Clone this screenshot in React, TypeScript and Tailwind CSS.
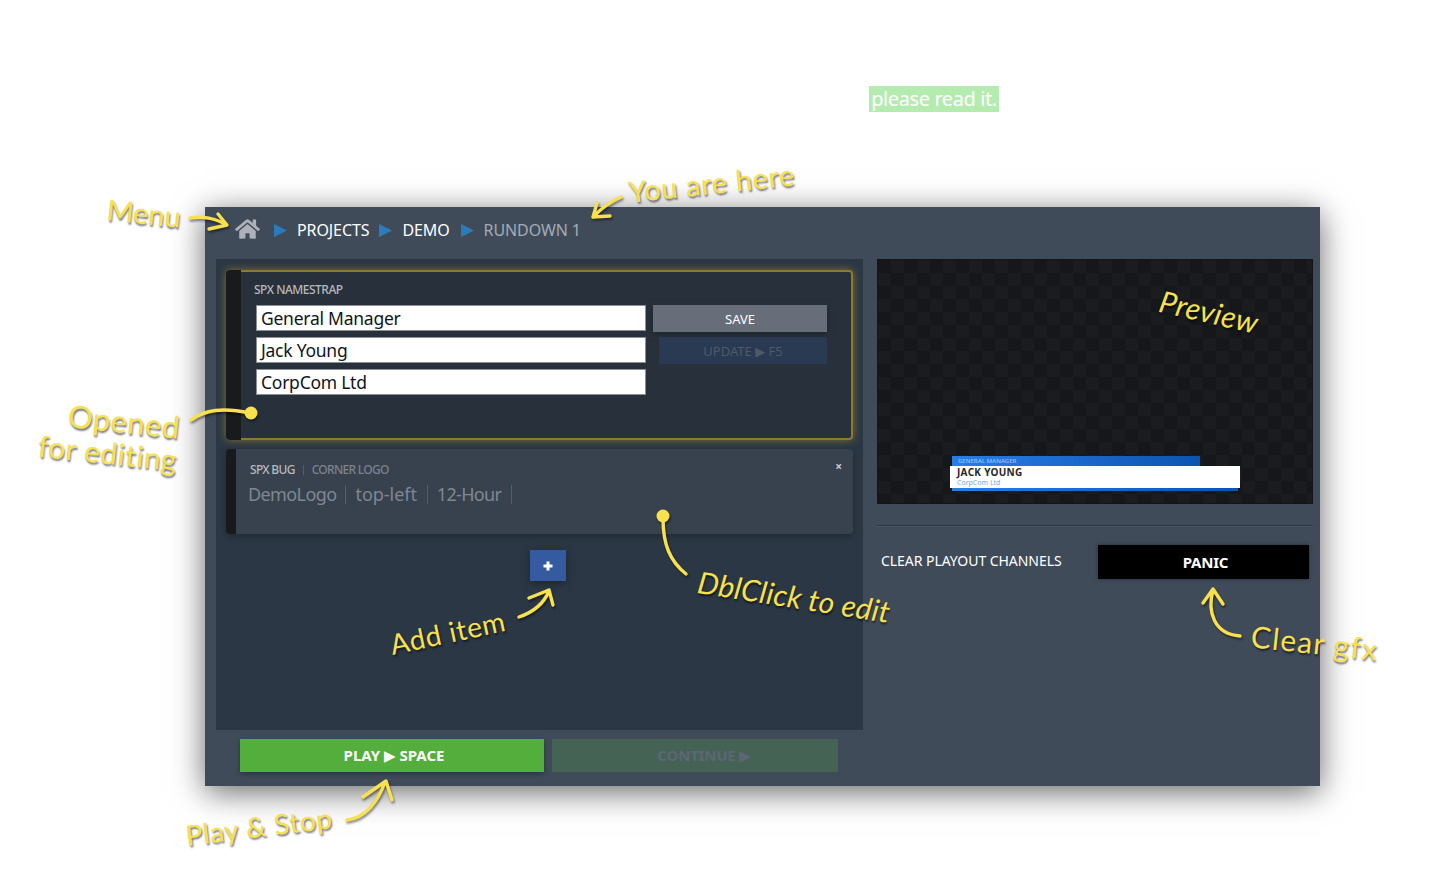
import { FaHome } from "react-icons/fa";

const ui = "font-['Noto_Sans','DejaVu_Sans',sans-serif]";
const note =
  "absolute whitespace-nowrap leading-none font-['Lato',sans-serif] text-[#f7e14f] [text-shadow:1px_2px_2px_rgba(0,0,0,0.55)]";

function Tri() {
  return (
    <svg width="13" height="13" viewBox="0 0 13 13" className="shrink-0">
      <polygon points="0,0 13,6.5 0,13" fill="#2a7cbc" />
    </svg>
  );
}

function Field({ value }: { value: string }) {
  return (
    <div className="w-[390px] h-[26px] bg-white border border-[#8a8f96] pl-[4px] text-[17.5px] leading-[24px] text-[#10151c] tracking-[-0.25px]">
      {value}
    </div>
  );
}

function Arrows() {
  return (
    <svg
      width="1456"
      height="884"
      viewBox="0 0 1456 884"
      className="absolute left-0 top-0 pointer-events-none drop-shadow-[1px_2px_1px_rgba(0,0,0,0.45)]"
      fill="none"
      stroke="#f7e14f"
      strokeWidth="3.4"
      strokeLinecap="round"
      strokeLinejoin="round"
    >
      <path d="M190 218C202 216 216 218 226 225M218 214L227 225L209 229" />
      <path d="M621 197C612 201 603 207 595 215M597 203L593 217L610 216" />
      <path d="M191 420C205 410 222 407 250 413" />
      <circle cx="251" cy="413" r="6.5" fill="#f7e14f" stroke="none" />
      <circle cx="663" cy="516" r="6.5" fill="#f7e14f" stroke="none" />
      <path d="M663 518C663 545 670 561 686 574" />
      <path d="M519 617C534 612 544 603 549 591M529 598L549 590L553 605" />
      <path d="M347 820C365 818 378 802 385 782M363 797L386 781L392 800" />
      <path d="M1213 590C1207 612 1214 634 1240 636M1203 603L1213 589L1223 604" />
    </svg>
  );
}

export default function App() {
  return (
    <div className={`relative w-[1456px] h-[884px] overflow-hidden bg-white ${ui}`}>
      <div className="h-[207px] pt-[86px] pl-[869px]">
        <div className="w-[130px] h-[26px] bg-[#b4ecb0] text-white text-[20px] leading-[26px] text-center tracking-[-0.4px]">
          please read it.
        </div>
      </div>

      <div className="ml-[205px] w-[1115px] h-[579px] bg-[#404b5a] shadow-[0_6px_30px_rgba(0,0,0,0.6)]">
        <div className="h-[52px] flex items-center pl-[30px] pb-[6px] text-[16px] tracking-[-0.1px]">
          <FaHome className="text-[#aeb2b8] w-[25px] h-[22px] -translate-y-[1px]" />
          <div className="ml-[14px]"><Tri /></div>
          <span className="ml-[10px] text-white">PROJECTS</span>
          <div className="ml-[10px]"><Tri /></div>
          <span className="ml-[10px] text-white">DEMO</span>
          <div className="ml-[11px]"><Tri /></div>
          <span className="ml-[10px] text-[#a3abb5]">RUNDOWN 1</span>
        </div>

        <div className="flex h-[471px]">
          <div className="ml-[11px] w-[647px] bg-[#2b3744] pt-[11px] pl-[10px] pr-[10px]">
            <div className="flex h-[170px] rounded-[4px] bg-[#28313b] border-y-2 border-r-2 border-[#8d7a2c] shadow-[0_0_8px_rgba(168,134,42,0.7)]">
              <div className="w-[15px] -my-[2px] bg-[#191a1b] rounded-l-[4px]" />
              <div className="pl-[13px] pt-[11px]">
                <div className="text-[12px] leading-[14px] font-medium text-[#b5b9be] tracking-[-0.5px]">SPX NAMESTRAP</div>
                <div className="flex mt-[8px] ml-[2px] gap-[7px]">
                  <div className="flex flex-col gap-[6px]">
                    <Field value="General Manager" />
                    <Field value="Jack Young" />
                    <Field value="CorpCom Ltd" />
                  </div>
                  <div className="flex flex-col items-end gap-[5px]">
                    <div className="w-[174px] h-[27px] bg-[#676e7a] text-white text-[13px] leading-[28px] text-center shadow-[0_2px_6px_rgba(0,0,0,0.3)]">SAVE</div>
                    <div className="w-[168px] h-[27px] bg-[#293a52] text-[#4e5a69] text-[13px] leading-[28px] text-center">UPDATE ▶ F5</div>
                  </div>
                </div>
              </div>
            </div>

            <div className="relative flex h-[85px] mt-[9px] rounded-[4px] bg-[#38424e] shadow-[0_2px_6px_rgba(0,0,0,0.25)]">
              <div className="w-[10px] bg-[#191a1b] rounded-l-[4px]" />
              <div className="pl-[12px] pt-[14px]">
                <div className="flex items-center ml-[2px] text-[12px] leading-[14px] font-medium tracking-[-0.7px]">
                  <span className="text-[#b5b9be]">SPX BUG</span>
                  <span className="mx-[8px] w-[1px] h-[10px] bg-[#3d6488]" />
                  <span className="text-[#7b828c]">CORNER LOGO</span>
                </div>
                <div className="flex items-center mt-[5px] text-[18px] leading-[24px] text-[#7f8791]">
                  <span className="tracking-[-0.6px]">DemoLogo</span>
                  <span className="ml-[8px] mr-[10px] w-[1px] h-[19px] bg-[#3d6488]" />
                  <span className="tracking-[-0.05px]">top-left</span>
                  <span className="ml-[10px] mr-[9px] w-[1px] h-[19px] bg-[#3d6488]" />
                  <span className="tracking-[-0.7px]">12-Hour</span>
                  <span className="ml-[10px] w-[1px] h-[19px] bg-[#3d6488]" />
                </div>
              </div>
              <span className="absolute right-[11px] top-[11px] text-[12px] leading-[14px] font-bold text-[#c8ccd1]">×</span>
            </div>

            <div className="flex justify-center mt-[16px] pl-[16px]">
              <div className="w-[36px] h-[31px] bg-[#345ba0] flex items-center justify-center shadow-[0_2px_8px_rgba(0,0,0,0.35)]">
                <svg width="10" height="10" viewBox="0 0 10 10"><path d="M3.5 0.5h3v3h3v3h-3v3h-3v-3h-3v-3h3z" fill="#fff" /></svg>
              </div>
            </div>
          </div>

          <div className="ml-[14px] w-[436px]">
            <div className="h-[245px] border border-[#11141a] pt-[196px] pl-[72px] bg-[#17191d] bg-[repeating-conic-gradient(#1a1c20_0_25%,#15171b_0_50%)] bg-[length:26px_26px]">
              <div className="ml-[2px] w-[248px] h-[10px] bg-gradient-to-r from-[#2a7de8] to-[#0a55b0] pl-[6px] text-[6px] leading-[10px] font-semibold text-[#8fbdf5]">GENERAL MANAGER</div>
              <div className="w-[290px] h-[22px] bg-white pl-[7px] pt-[1px]">
                <div className="text-[10px] leading-[11px] font-bold text-[#25282c] tracking-[0.3px]">JACK YOUNG</div>
                <div className="text-[7px] leading-[9px] text-[#6ea6ef]">CorpCom Ltd</div>
              </div>
              <div className="ml-[2px] w-[286px] h-[3px] bg-gradient-to-r from-[#2a7de8] to-[#0a55b0]" />
            </div>
            <div className="mt-[21px] h-[1px] bg-[#2d3643] shadow-[0_1px_0_#4a5564]" />
            <div className="flex items-center mt-[19px]">
              <span className="ml-[4px] text-[14px] leading-[30px] pb-[3px] text-white tracking-[-0.05px] w-[217px] whitespace-nowrap">CLEAR PLAYOUT CHANNELS</span>
              <div className="w-[211px] h-[34px] bg-black text-white text-[15px] leading-[34px] font-bold text-center shadow-[0_0_4px_rgba(0,0,0,0.4)] pl-[4px] tracking-[-0.2px]">PANIC</div>
            </div>
          </div>
        </div>

        <div className="flex pl-[35px] pt-[9px] gap-[8px]">
          <div className="w-[304px] h-[33px] bg-[#54ae3c] text-white text-[15px] leading-[32px] font-bold text-center pl-[4px] tracking-[0px] shadow-[0_2px_5px_rgba(0,0,0,0.35)]">PLAY ▶ SPACE</div>
          <div className="w-[286px] h-[33px] bg-[#456354] text-[#5b6676] text-[15px] leading-[32px] font-bold text-center pl-[18px] tracking-[-0.2px]">CONTINUE ▶</div>
        </div>
      </div>

      <Arrows />

      <span className={`${note} left-[107px] top-[198px] text-[29px] rotate-[6deg]`}>Menu</span>
      <span className={`${note} left-[628px] top-[168px] text-[29px] rotate-[-6deg] tracking-[0.7px]`}>You are here</span>
      <span className={`${note} left-[68px] top-[406px] text-[31px] rotate-[6deg] tracking-[0.5px]`}>Opened</span>
      <span className={`${note} left-[38px] top-[437px] text-[30px] rotate-[6deg] tracking-[0.4px]`}>for editing</span>
      <span className={`${note} italic left-[1159px] top-[296px] text-[30px] rotate-[13deg] tracking-[0.4px]`}>Preview</span>
      <span className={`${note} left-[389px] top-[618px] text-[28px] rotate-[-12deg] tracking-[0.7px]`}>Add item</span>
      <span className={`${note} italic left-[697px] top-[581px] text-[30px] rotate-[9deg] tracking-[0.2px]`}>DblClick to edit</span>
      <span className={`${note} left-[1251px] top-[627px] text-[30px] rotate-[6deg] tracking-[1.2px]`}>Clear gfx</span>
      <span className={`${note} left-[185px] top-[812px] text-[28px] rotate-[-7deg] tracking-[0.6px]`}>Play &amp; Stop</span>
    </div>
  );
}
